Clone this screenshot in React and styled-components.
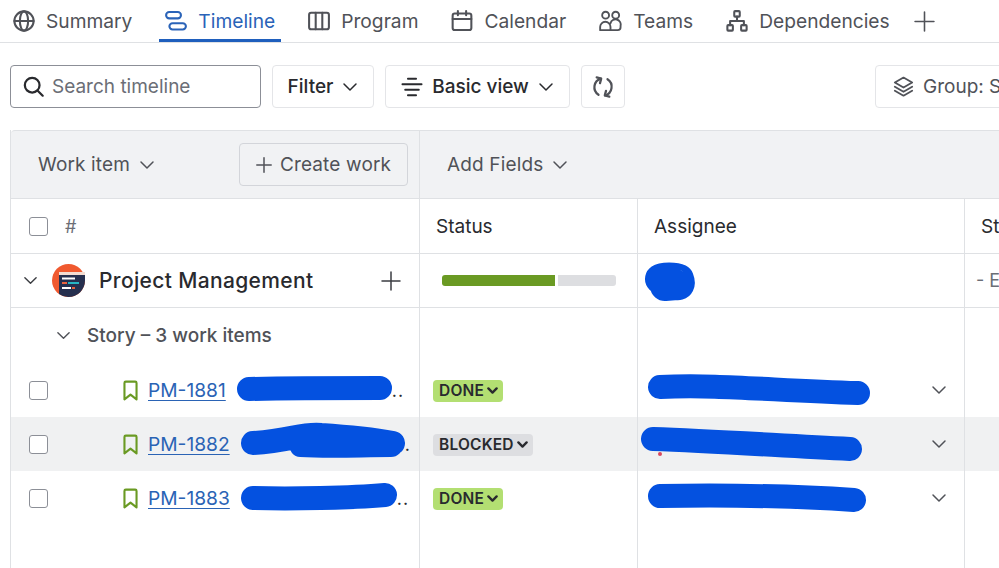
import React from "react";
import styled, { createGlobalStyle } from "styled-components";

const Global = createGlobalStyle`
  html, body {
    margin: 0;
    padding: 0;
    width: 999px;
    height: 568px;
    overflow: hidden;
    background: #fff;
    font-family: Inter, "Noto Sans", sans-serif;
    color: #292a2e;
  }
  * { box-sizing: border-box; }
`;

const Page = styled.div`
  width: 999px;
  height: 568px;
  overflow: hidden;
`;

const Tabs = styled.nav`
  display: flex;
  align-items: stretch;
  gap: 21px;
  height: 43px;
  padding-left: 7px;
  border-bottom: 1px solid #dfe1e4;
`;

const Tab = styled.div`
  position: relative;
  display: flex;
  align-items: center;
  gap: 11px;
  height: 42px;
  padding: 0 6px;
  font-size: 19.2px;
  color: ${(p) => (p.$active ? "#2a63b8" : "#505258")};
  &::after {
    content: "";
    display: ${(p) => (p.$active ? "block" : "none")};
    position: absolute;
    left: 0;
    right: 0;
    bottom: 0;
    height: 3px;
    background: #1f5fbd;
  }
`;

const AddTab = styled.div`
  display: flex;
  align-items: center;
  margin-left: -3px;
  color: #505258;
`;

const Toolbar = styled.div`
  display: flex;
  align-items: center;
  gap: 11px;
  height: 43px;
  margin: 22px 0;
  padding-left: 10px;
`;

const Search = styled.div`
  display: flex;
  align-items: center;
  gap: 8px;
  flex: 0 0 251px;
  height: 43px;
  padding-left: 12px;
  border: 1px solid #8c8f97;
  border-radius: 4px;
  font-size: 19px;
  color: #6b6e76;
`;

const ToolButton = styled.div`
  display: flex;
  align-items: center;
  justify-content: center;
  flex-shrink: 0;
  gap: 9px;
  height: 43px;
  width: ${(p) => p.$width}px;
  margin-left: ${(p) => p.$offset || 0}px;
  border: 1px solid #e4e5e8;
  border-radius: 4px;
  font-size: 19px;
  font-weight: 450;
  color: ${(p) => p.$color || "#292a2e"};
`;

const GroupButton = styled(ToolButton)`
  justify-content: flex-start;
  padding-left: 17px;
  white-space: nowrap;
  font-weight: 400;
`;

const Table = styled.div`
  width: 1100px;
  margin-left: 10px;
  border-left: 1px solid #dfe1e4;
`;

const Row = styled.div`
  display: grid;
  grid-template-columns: 409px 218px 327px 1fr;
  height: ${(p) => p.$height}px;
  background: ${(p) => p.$bg || "#fff"};
  border-bottom: ${(p) => (p.$line ? "1px solid #dfe1e4" : "none")};
`;

const HeadRow = styled(Row)`
  border-top: 1px solid #dfe1e4;
  border-top-left-radius: 4px;
`;

const Cell = styled.div`
  display: flex;
  align-items: center;
  min-width: 0;
  white-space: nowrap;
  padding-left: ${(p) => p.$pad ?? 16}px;
  padding-right: ${(p) => p.$right || 0}px;
  gap: ${(p) => p.$gap || 0}px;
  border-right: 1px solid #dfe1e4;
  font-size: 19px;
  color: ${(p) => p.$color || "inherit"};
`;

const AddFieldsCell = styled(Cell)`
  grid-column: 2 / 5;
  border-right: none;
`;

const HeadLabel = styled.span`
  font-size: 19px;
  letter-spacing: 0.15px;
  color: #505258;
`;

const CreateButton = styled.div`
  display: flex;
  align-items: center;
  justify-content: center;
  gap: 8px;
  width: 169px;
  height: 43px;
  margin-left: auto;
  margin-right: 11px;
  background: #f1f2f4;
  border: 1px solid #d3d5da;
  border-radius: 4px;
  font-size: 19px;
  letter-spacing: 0.15px;
  color: #505258;
`;

const Checkbox = styled.span`
  display: block;
  flex: 0 0 19px;
  width: 19px;
  height: 19px;
  background: #fff;
  border: 1.5px solid #8c8f97;
  border-radius: 3px;
`;

const Hash = styled.span`
  margin-left: 17px;
  font-size: 18px;
  color: #6b6e76;
`;

const ColumnTitle = styled.span`
  font-size: 19px;
  color: #292a2e;
`;

const ProjectName = styled.span`
  margin-left: 14px;
  font-size: 21px;
  font-weight: 450;
  letter-spacing: 0.35px;
  color: #292a2e;
`;

const ProjectAdd = styled.span`
  display: flex;
  margin-left: auto;
  color: #3b3d42;
`;

const Progress = styled.div`
  display: flex;
  gap: 3px;
  width: 174px;
  height: 11px;
  margin-left: 6px;
`;

const ProgressDone = styled.div`
  flex: 0 0 113px;
  background: #6a9a23;
  border-radius: 3px 0 0 3px;
`;

const ProgressRest = styled.div`
  flex: 1;
  background: #dddee1;
  border-radius: 0 3px 3px 0;
`;

const MutedDash = styled.span`
  margin-left: -5px;
  font-size: 18px;
  color: #6b6e76;
`;

const StoryLabel = styled.span`
  margin-left: 16px;
  font-size: 19px;
  font-weight: 450;
  color: #505258;
`;

const Spacer = styled.span`
  flex: 0 0 ${(p) => p.$w}px;
`;

const IssueLink = styled.a`
  margin-left: 7px;
  font-size: 19.2px;
  color: #2a63b5;
  text-decoration: underline;
  text-underline-offset: 3px;
`;

const Dots = styled.span`
  position: relative;
  top: 1px;
  font-size: 18px;
  line-height: 1;
  letter-spacing: 1px;
  color: #292a2e;
`;

const Lozenge = styled.span`
  display: inline-flex;
  align-items: center;
  gap: 3px;
  height: 22px;
  margin-top: 1px;
  padding: 0 5px 0 6px;
  background: ${(p) => (p.$kind === "done" ? "#b3df72" : "#dddee1")};
  border-radius: 4px;
  font-size: 15.5px;
  font-weight: 600;
  letter-spacing: 0.2px;
  color: #292a2e;
`;

const RowChevron = styled.span`
  display: flex;
  margin-left: auto;
  color: #505258;
`;

const IconSvg = styled.svg`
  display: block;
  flex-shrink: 0;
`;

const LogoSvg = styled.svg`
  display: block;
  flex-shrink: 0;
  margin-left: 14px;
`;

const ScribbleSvg = styled.svg`
  display: block;
  flex-shrink: 0;
  overflow: visible;
  margin-left: ${(p) => p.$shift || 0}px;
`;

const Ico = ({ size = 22, children, color = "currentColor", width = 1.5 }) => (
  <IconSvg
    width={size}
    height={size}
    viewBox="0 0 16 16"
    fill="none"
    stroke={color}
    strokeWidth={width}
    strokeLinecap="round"
    strokeLinejoin="round"
  >
    {children}
  </IconSvg>
);

const Globe = () => (
  <Ico>
    <circle cx="8" cy="8" r="7" />
    <ellipse cx="8" cy="8" rx="3" ry="7" />
    <path d="M1 8h14" />
  </Ico>
);
const TimelineIcon = () => (
  <Ico>
    <rect x="0.8" y="1.5" width="10.8" height="4.6" rx="2.3" />
    <rect x="3.2" y="9.6" width="12" height="4.6" rx="2.3" />
  </Ico>
);
const ProgramIcon = () => (
  <Ico>
    <rect x="0.8" y="2" width="14.4" height="12" rx="1.5" />
    <path d="M5.6 2v12M10.4 2v12" />
  </Ico>
);
const CalendarIcon = () => (
  <Ico>
    <rect x="1.2" y="2.6" width="13.6" height="12" rx="1.5" />
    <path d="M1.2 6.6h13.6M5 0.8v3M11 0.8v3" />
  </Ico>
);
const TeamsIcon = () => (
  <Ico size={23} width={1.3}>
    <circle cx="4.6" cy="3.6" r="2.4" />
    <circle cx="11.6" cy="3.6" r="2.4" />
    <path d="M0.8 14v-2.2a3.6 3.6 0 0 1 7.2 0V14H1.4M8 9.2A3.6 3.6 0 0 1 15 11v1a2 2 0 0 1-2 2H8" />
  </Ico>
);
const DependencyIcon = () => (
  <Ico>
    <rect x="6" y="0.8" width="4" height="4" rx="0.6" />
    <rect x="1" y="11" width="4" height="4" rx="0.6" />
    <rect x="11" y="11" width="4" height="4" rx="0.6" />
    <path d="M8 4.8V8M3 11V8h10v3" />
  </Ico>
);
const Plus = ({ size = 21, width = 1.2 }) => (
  <Ico size={size} width={width}>
    <path d="M8 0.8v14.4M0.8 8h14.4" />
  </Ico>
);
const Chevron = ({ size = 16, width = 1.5 }) => (
  <Ico size={size} width={width}>
    <path d="M2 5l6 6 6-6" />
  </Ico>
);
const SearchIcon = () => (
  <Ico size={21} width={1.7} color="#292a2e">
    <circle cx="7" cy="7" r="5.6" />
    <path d="M11 11l4 4" />
  </Ico>
);
const ViewIcon = () => (
  <Ico size={22} width={1.3}>
    <path d="M5 2h6M1 6h14M3 10h10M5 14h6" />
  </Ico>
);
const RefreshIcon = () => (
  <Ico size={24} width={1.5} color="#505258">
    <path d="M6.6 2.4A6 6 0 0 0 5 13.2M9.4 13.6A6 6 0 0 0 11 2.8" />
    <path d="M3.8 1.6l3 .8-.8 3M12.2 14.4l-3-.8.8-3" />
  </Ico>
);
const LayersIcon = () => (
  <Ico size={21} width={1.4} color="#505258">
    <path d="M8 1.2L14.6 5 8 8.8 1.4 5z" />
    <path d="M1.4 8.2L8 12l6.6-3.8M1.4 11.2L8 15l6.6-3.8" />
  </Ico>
);
const Bookmark = () => (
  <Ico size={21} width={1.6} color="#6a9a23">
    <path d="M3.4 2.2a1 1 0 0 1 1-1h7.2a1 1 0 0 1 1 1v12.6L8 11.2l-4.6 3.6z" />
  </Ico>
);
const SmallChevron = () => (
  <Ico size={11} width={3.4}>
    <path d="M2 5l6 6 6-6" />
  </Ico>
);

const ProjectLogo = () => (
  <LogoSvg width="33" height="33" viewBox="0 0 33 33">
    <circle cx="16.5" cy="16.5" r="16.5" fill="#f0592f" />
    <path d="M7 9h26v7.5A16.5 16.5 0 0 1 16.5 33 16 16 0 0 1 7 30z" fill="#26304f" />
    <rect x="7" y="8" width="26" height="3" fill="#f4ddd2" />
    <rect x="10" y="13.5" width="13" height="2" fill="#fff" />
    <rect x="10" y="18" width="5" height="2" fill="#e8643f" />
    <rect x="16" y="18" width="11" height="2" fill="#27b5c4" />
    <rect x="10" y="23" width="9" height="2" fill="#fff" />
    <rect x="20" y="23" width="3" height="2" fill="#e8643f" />
  </LogoSvg>
);

// marker strokes laid over the hidden names, drawn as one thick stroke each
const Scribble = ({ w, h, d, stroke = 24, shift, children }) => (
  <ScribbleSvg $shift={shift} width={w} height={h} viewBox={`0 0 ${w} ${h}`} fill="none">
    {children}
    <path d={d} stroke="#0451e0" strokeWidth={stroke} strokeLinecap="round" strokeLinejoin="round" />
  </ScribbleSvg>
);

const issues = [
  {
    key: "PM-1881",
    status: "done",
    gap: 11,
    title: { w: 155, h: 28, d: "M12 13 C50 12 110 12 143 12" },
    dots: "..",
    person: { w: 222, h: 30, d: "M12 12 C70 9 130 16 210 18" },
  },
  {
    key: "PM-1882",
    status: "blocked",
    gap: 11,
    bg: "#f0f1f2",
    title: { w: 164, h: 42, d: "M12 20 C50 18 60 10 80 12 C110 14 130 16 152 20 M60 22 C90 24 120 22 150 22" },
    dots: ".",
    person: {
      w: 221,
      h: 34,
      d: "M12 12 C70 14 130 18 209 22",
      shift: -7,
      children: <circle cx="19" cy="27" r="2" fill="#d9485f" />,
    },
  },
  {
    key: "PM-1883",
    status: "done",
    gap: 11,
    title: { w: 156, h: 30, d: "M12 15 C50 16 110 15 144 12" },
    dots: "..",
    person: { w: 218, h: 28, d: "M12 12 C70 11 130 11 206 16" },
  },
];

const IssueRow = ({ issue }) => (
  <Row $height={54} $bg={issue.bg}>
    <Cell $pad={18}>
      <Checkbox />
      <Spacer $w={72} />
      <Bookmark />
      <IssueLink>{issue.key}</IssueLink>
      <Spacer $w={issue.gap} />
      <Scribble {...issue.title} />
      <Dots>{issue.dots}</Dots>
    </Cell>
    <Cell $pad={13}>
      <Lozenge $kind={issue.status}>
        {issue.status === "done" ? "DONE" : "BLOCKED"}
        <SmallChevron />
      </Lozenge>
    </Cell>
    <Cell $pad={10} $right={17}>
      <Scribble {...issue.person} />
      <RowChevron>
        <Chevron />
      </RowChevron>
    </Cell>
    <Cell />
  </Row>
);

export default function App() {
  return (
    <Page>
      <Global />
      <Tabs>
        <Tab>
          <Globe />
          Summary
        </Tab>
        <Tab $active>
          <TimelineIcon />
          Timeline
        </Tab>
        <Tab>
          <ProgramIcon />
          Program
        </Tab>
        <Tab>
          <CalendarIcon />
          Calendar
        </Tab>
        <Tab>
          <TeamsIcon />
          Teams
        </Tab>
        <Tab>
          <DependencyIcon />
          Dependencies
        </Tab>
        <AddTab>
          <Plus />
        </AddTab>
      </Tabs>
      <Toolbar>
        <Search>
          <SearchIcon />
          Search timeline
        </Search>
        <ToolButton $width={102}>
          Filter
          <Chevron />
        </ToolButton>
        <ToolButton $width={185}>
          <ViewIcon />
          Basic view
          <Chevron />
        </ToolButton>
        <ToolButton $width={44}>
          <RefreshIcon />
        </ToolButton>
        <GroupButton $width={200} $offset={239} $color="#505258">
          <LayersIcon />
          Group: Story
        </GroupButton>
      </Toolbar>
      <Table>
        <HeadRow $height={69} $bg="#f1f2f4" $line>
          <Cell $pad={27} $gap={9} $color="#505258">
            <HeadLabel>Work item</HeadLabel>
            <Chevron />
            <CreateButton>
              <Plus size={16} width={1.5} />
              Create work
            </CreateButton>
          </Cell>
          <AddFieldsCell $pad={27} $gap={9} $color="#505258">
            <HeadLabel>Add Fields</HeadLabel>
            <Chevron />
          </AddFieldsCell>
        </HeadRow>
        <Row $height={55} $line>
          <Cell $pad={18}>
            <Checkbox />
            <Hash>#</Hash>
          </Cell>
          <Cell>
            <ColumnTitle>Status</ColumnTitle>
          </Cell>
          <Cell>
            <ColumnTitle>Assignee</ColumnTitle>
          </Cell>
          <Cell>
            <ColumnTitle>Start date</ColumnTitle>
          </Cell>
        </Row>
        <Row $height={54} $line>
          <Cell $pad={12} $right={18} $color="#3b3d42">
            <Chevron size={15} />
            <ProjectLogo />
            <ProjectName>Project Management</ProjectName>
            <ProjectAdd>
              <Plus size={20} />
            </ProjectAdd>
          </Cell>
          <Cell>
            <Progress>
              <ProgressDone />
              <ProgressRest />
            </Progress>
          </Cell>
          <Cell $pad={7}>
            <Scribble w={50} h={38} stroke={30} d="M15 17 C18 15 30 15 34 17 C36 22 34 24 32 23 L20 24" />
          </Cell>
          <Cell>
            <MutedDash>- Empty</MutedDash>
          </Cell>
        </Row>
        <Row $height={55}>
          <Cell $pad={45} $color="#505258">
            <Chevron size={15} />
            <StoryLabel>Story – 3 work items</StoryLabel>
          </Cell>
          <Cell />
          <Cell />
          <Cell />
        </Row>
        {issues.map((issue) => (
          <IssueRow key={issue.key} issue={issue} />
        ))}
        <Row $height={44}>
          <Cell />
          <Cell />
          <Cell />
          <Cell />
        </Row>
      </Table>
    </Page>
  );
}
